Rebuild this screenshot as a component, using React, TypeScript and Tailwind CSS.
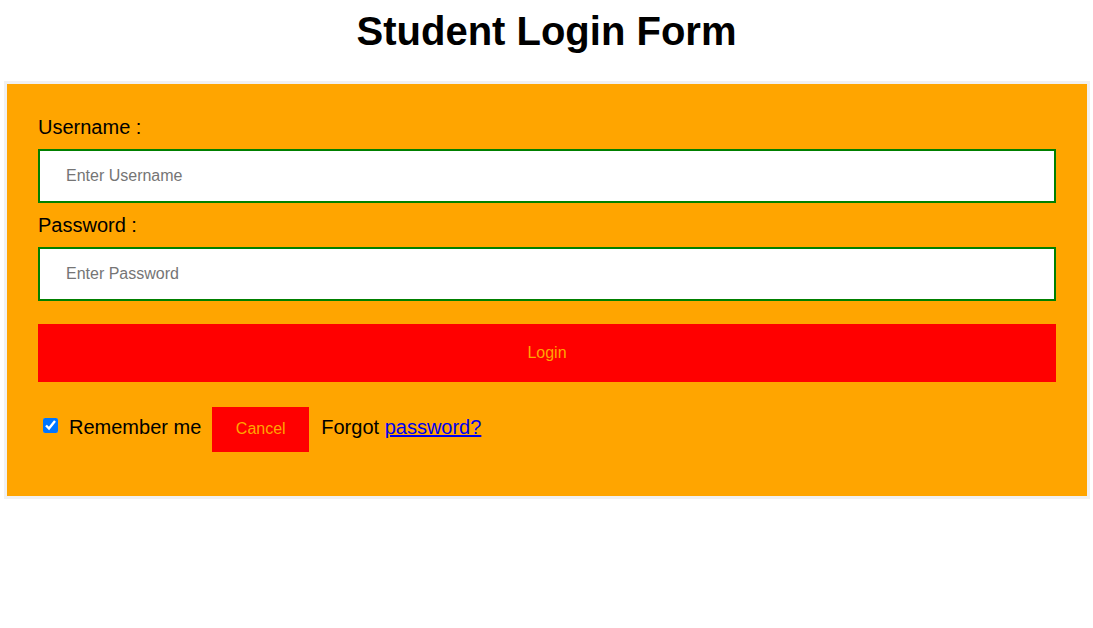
export default function App() {
  return (
    <div className="min-h-screen bg-white text-black [font-family:'Liberation_Sans',Arial,sans-serif]">
      <h1 className="pt-[8px] text-center text-[40px] leading-[46px] font-bold">Student Login Form</h1>

      <form
        className="mt-[27px] ml-[4px] mr-[3px] border-[3px] border-[#f1f1f1] bg-[#ffa500] px-[31px] pt-[31px] pb-[44px]"
        onSubmit={(event) => event.preventDefault()}
      >
        <label className="block text-[20px] leading-[24px]">Username : </label>
        <input
          type="text"
          placeholder="Enter Username"
          className="mt-[10px] mb-[10px] block h-[54px] w-full border-2 border-[#008000] bg-white pl-[26px] text-[16px] outline-none placeholder:text-[#757575]"
        />

        <label className="block text-[20px] leading-[24px]">Password : </label>
        <input
          type="password"
          placeholder="Enter Password"
          className="mt-[10px] block h-[54px] w-full border-2 border-[#008000] bg-white pl-[26px] text-[16px] outline-none placeholder:text-[#757575]"
        />

        <button type="submit" className="mt-[23px] block h-[58px] w-full bg-[#ff0000] text-[16px] text-[#ffa500]">
          Login
        </button>

        <div className="mt-[25px] flex items-center text-[20px]">
          <input type="checkbox" defaultChecked className="ml-[5px] mb-[8px] h-[15px] w-[15px] accent-[#0075ff]" />
          <span className="ml-[11px] pb-[5px]">Remember me</span>
          <button type="button" className="ml-[11px] h-[45px] w-[97px] pb-[2px] bg-[#ff0000] text-[16px] text-[#ffa500]">
            Cancel
          </button>
          <span className="ml-[12px] pb-[5px]">
            Forgot{' '}
            <a href="#" className="text-[#0000ee] underline">
              password?
            </a>
          </span>
        </div>
      </form>
    </div>
  );
}
